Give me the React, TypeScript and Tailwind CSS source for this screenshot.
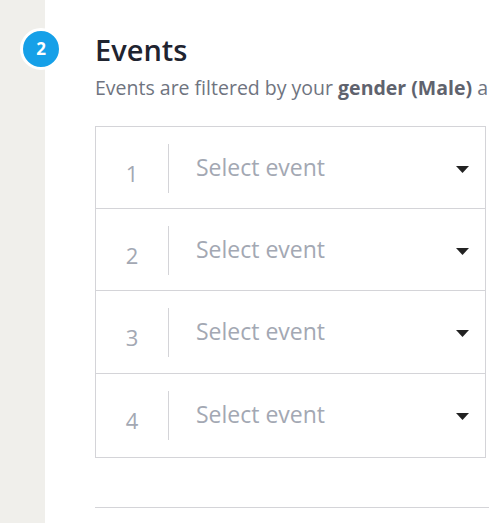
import React from 'react';

const rows = [1, 2, 3, 4];

export default function App() {
  return (
    <div
      className="flex h-[523px] w-[489px] overflow-hidden bg-white"
      style={{ fontFamily: '"Open Sans", sans-serif' }}
    >
      {/* Left rail */}
      <div className="relative w-[45px] shrink-0 bg-[#f0efeb]">
        <div className="absolute left-[20px] top-[28px] flex h-[42px] w-[42px] items-center justify-center rounded-full border-[3px] border-white bg-[#16a0e8] text-[17px] font-bold text-white">
          2
        </div>
      </div>

      {/* Content */}
      <div className="min-w-0 flex-1 pl-[50px] pt-[30px]">
        <h2 className="text-[29px] font-semibold leading-[40px] text-[#1f2430]">Events</h2>
        <p className="mt-[4px] whitespace-nowrap text-[19.5px] leading-[28px] text-[#6f7480]">
          Events are filtered by your <span className="font-bold text-[#5f636e]">gender (Male)</span> and age
        </p>

        <div className="mt-[24px] w-[391px] border border-[#d4d4d8]">
          {rows.map((n, i) => (
            <div
              key={n}
              className={`flex items-start ${i < 2 ? 'h-[82px]' : 'h-[83px]'} ${
                i < rows.length - 1 ? 'border-b border-[#d4d4d8]' : ''
              }`}
            >
              <div className="flex w-[72px] shrink-0 justify-center pt-[32px] text-[22px] leading-[28px] text-[#a3a8b3]">
                {n}
              </div>
              <div className="mt-[17px] h-[49px] w-px bg-[#d4d4d8]" />
              <div className="flex flex-1 items-center justify-between pl-[27px] pr-[16px] pt-[25px]">
                <span className="text-[23px] leading-[30px] text-[#a3a8b3]">Select event</span>
                <svg width="13" height="7" viewBox="0 0 13 7" className="mt-[5px]">
                  <path d="M0 0 H13 L6.5 7 Z" fill="#222" />
                </svg>
              </div>
            </div>
          ))}
        </div>

        <div className="mt-[49px] h-px w-full bg-[#d4d4d8]" />
      </div>
    </div>
  );
}
